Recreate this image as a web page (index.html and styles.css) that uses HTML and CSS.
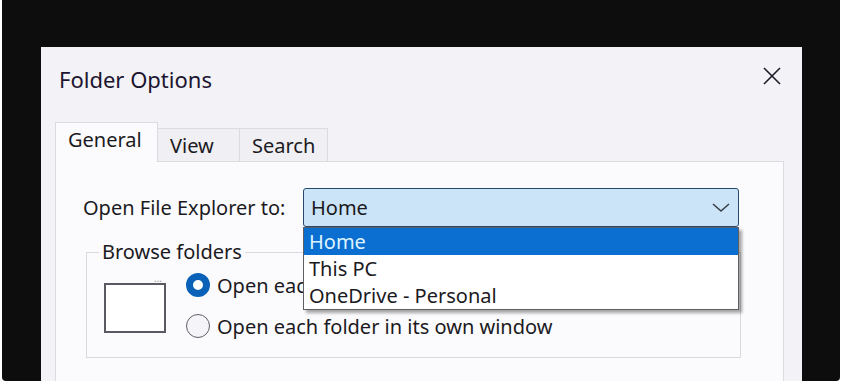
FILE: index.html
```html
<!DOCTYPE html>
<html lang="en">
<head>
    <meta charset="UTF-8">
    <title>Folder Options</title>
    <link rel="stylesheet" href="styles.css">
</head>
<body>

<div class="pantalla">
    <div class="dialogo">
        <div class="cabecera">
            <div class="titulo">Folder Options</div>
            <svg class="cerrar" width="20" height="20" viewBox="0 0 20 20">
                <path d="M2 2 L18 18 M18 2 L2 18" stroke="#1c1a24" stroke-width="1.6" fill="none"/>
            </svg>
        </div>

        <div class="pestanas">
            <div class="pestana activa">General</div>
            <div class="pestana">View</div>
            <div class="pestana">Search</div>
        </div>

        <div class="panel">
            <div class="fila-combo">
                <span class="etiqueta">Open File Explorer to:</span>
                <div class="combo">
                    <span>Home</span>
                    <svg width="18" height="10" viewBox="0 0 18 10">
                        <path d="M1 1 L9 8 L17 1" stroke="#3a3f4a" stroke-width="1.6" fill="none"/>
                    </svg>
                    <!-- lista desplegada -->
                    <div class="lista">
                        <div class="opcion elegida">Home</div>
                        <div class="opcion">This PC</div>
                        <div class="opcion">OneDrive - Personal</div>
                    </div>
                </div>
            </div>

            <fieldset class="grupo">
                <legend>Browse folders</legend>
                <div class="grupo-cuerpo">
                    <div class="ventanita"><span class="puntos">...</span></div>
                    <div class="radios">
                        <div class="radio-fila">
                            <span class="radio marcado"></span>
                            <span>Open each folder in the same window</span>
                        </div>
                        <div class="radio-fila">
                            <span class="radio"></span>
                            <span>Open each folder in its own window</span>
                        </div>
                    </div>
                </div>
            </fieldset>
        </div>
    </div>
</div>

</body>
</html>
```

FILE: styles.css
```css
html, body {
    margin: 0;
    padding: 0;
    width: 844px;
    height: 388px;
    overflow: hidden;
    background: #ffffff;
    font-family: 'Noto Sans', 'Open Sans', sans-serif;
    color: #1b1a22;
}

/* Marco negro alrededor del dialogo */
.pantalla {
    margin-left: 2px;
    width: 838px;
    height: 381px;
    box-sizing: border-box;
    padding: 47px 0 0 39px;
    background: #0d0d0e;
    border-radius: 0 0 4px 4px;
    overflow: hidden;
}

.dialogo {
    width: 761px;
    height: 334px;
    background: #f3f2f6;
    display: flex;
    flex-direction: column;
}

.cabecera {
    height: 75px;
    box-sizing: border-box;
    padding: 17px 20px 0 18px;
    display: flex;
    justify-content: space-between;
    align-items: flex-start;
}
.titulo { font-size: 22px; line-height: 30px; color: #1c1530; }
.cerrar { margin-top: 2px; }

/* Pestañas */
.pestanas {
    display: flex;
    align-items: flex-end;
    margin-left: 14px;
    height: 40px;
    margin-bottom: -1px;
}
.pestana {
    height: 34px;
    box-sizing: border-box;
    border: 1px solid #dcdce0;
    border-bottom: none;
    border-left: none;
    background: #f0eff3;
    font-size: 20px;
    line-height: 34px;
    padding: 0 12px;
}
.pestana.activa {
    position: relative;
    z-index: 1;
    height: 40px;
    line-height: 34px;
    border-left: 1px solid #dcdce0;
    background: #fbfbfd;
    width: 103px;
    padding: 0 12px;
}
.pestana:nth-child(2) { width: 82px; }
.pestana:nth-child(3) { width: 88px; }

.panel {
    margin-left: 14px;
    width: 729px;
    flex: 1;
    box-sizing: border-box;
    border: 1px solid #dcdce0;
    border-bottom: none;
    background: #fbfbfd;
    padding: 26px 0 0 27px;
    font-size: 20px;
}

.fila-combo {
    display: flex;
    align-items: center;
}
.etiqueta { width: 220px; }

.combo {
    position: relative;
    width: 436px;
    height: 39px;
    box-sizing: border-box;
    border: 1.5px solid #27496c;
    border-radius: 3px;
    background: #cce4f7;
    display: flex;
    align-items: center;
    justify-content: space-between;
    padding: 0 8px 0 7px;
}

.lista {
    position: absolute;
    top: 38px;
    left: -1px;
    width: 436px;
    height: 83px;
    box-sizing: border-box;
    border: 1px solid #5e5e64;
    background: #ffffff;
    box-shadow: 3px 3px 3px rgba(0, 0, 0, 0.35);
    z-index: 5;
}
.opcion {
    height: 27px;
    line-height: 27px;
    padding-left: 5px;
}
.opcion.elegida {
    background: #0a6fd0;
    color: #dff4ff;
}

/* Grupo "Browse folders" */
.grupo {
    margin: 11px 0 0 3px;
    width: 655px;
    height: 120px;
    box-sizing: border-box;
    border: 1px solid #d9d9de;
    padding: 0 0 0 12px;
}
.grupo legend {
    padding: 0 3px;
    line-height: 28px;
}
.grupo-cuerpo {
    display: flex;
    align-items: flex-start;
}
.ventanita {
    margin: 17px 0 0 5px;
    width: 62px;
    height: 50px;
    box-sizing: border-box;
    border: 2px solid #5a5860;
    background: #ffffff;
    position: relative;
}
.puntos {
    position: absolute;
    top: -14px;
    right: 2px;
    font-size: 10px;
    color: #9a99a2;
}
.radios {
    margin: 5px 0 0 20px;
    display: flex;
    flex-direction: column;
    gap: 13px;
}
.radio-fila {
    display: flex;
    align-items: center;
    gap: 7px;
    height: 28px;
}
.radio {
    width: 24px;
    height: 24px;
    box-sizing: border-box;
    border-radius: 50%;
    border: 1.5px solid #5f5d66;
    background: #f5f4f8;
}
.radio.marcado {
    border: 7px solid #0a62b8;
    background: #ffffff;
}
```
